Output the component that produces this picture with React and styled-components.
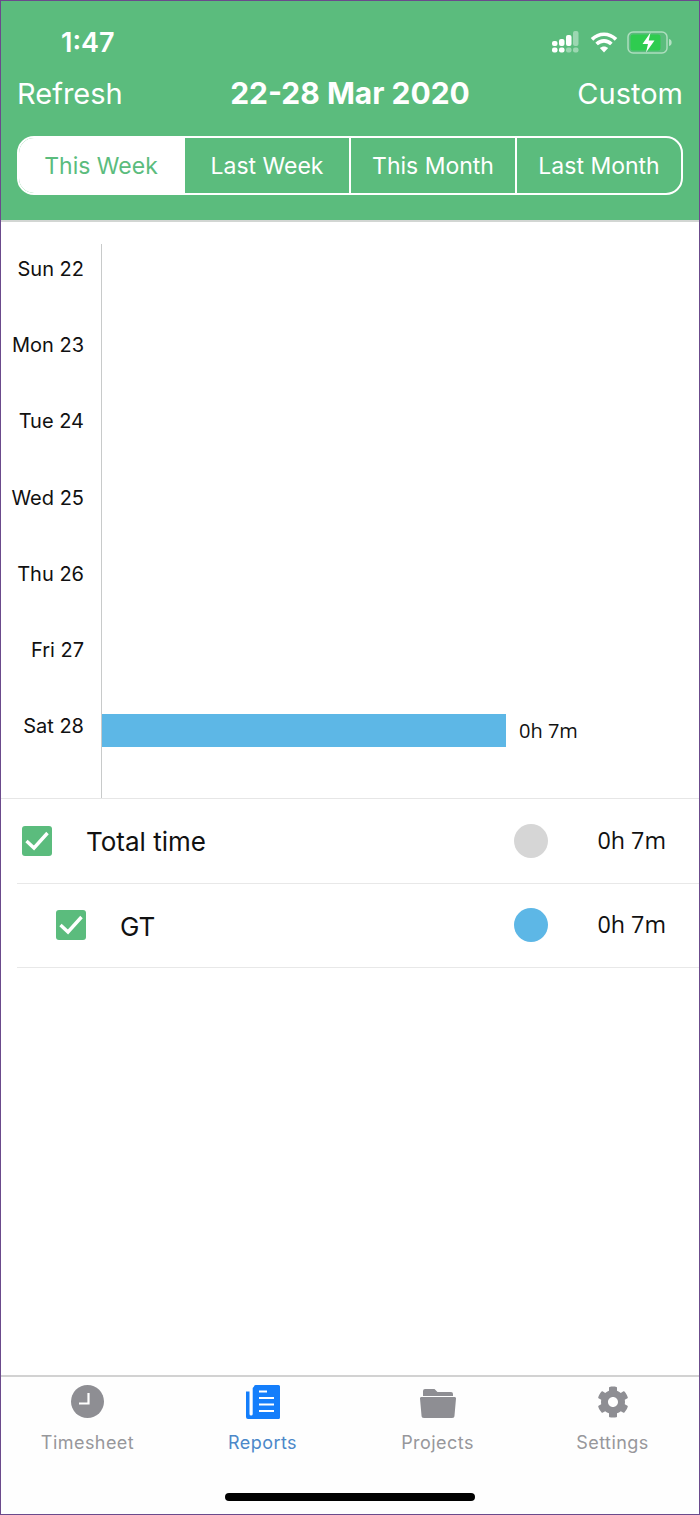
import React from 'react'
import styled, { createGlobalStyle } from 'styled-components'
import { FaCog } from 'react-icons/fa'

const GREEN = '#5BBC7D'
const BLUE = '#5DB7E6'

const GlobalStyle = createGlobalStyle`
  html, body { margin: 0; padding: 0; background: #fff; }
  * { box-sizing: border-box; }
  body { font-family: Inter, "Liberation Sans", sans-serif; }
`

const Phone = styled.div`
  width: 700px;
  height: 1515px;
  border: 1px solid #6B4A8C;
  display: flex;
  flex-direction: column;
  background: #fff;
  overflow: hidden;
`
const Header = styled.header`
  height: 221px;
  flex: none;
  background: ${GREEN};
  border-bottom: 2px solid #D2D6D3;
  color: #fff;
`
const StatusBar = styled.div`
  height: 70px;
  display: flex;
  align-items: center;
  justify-content: space-between;
  padding: 12px 26px 0 60px;
`
const Clock = styled.span`
  font-size: 27px;
  font-weight: 600;
`
const StatusIcons = styled.div`
  display: flex;
  align-items: center;
  gap: 9px;
`
const NavRow = styled.div`
  height: 44px;
  display: flex;
  align-items: center;
  justify-content: space-between;
  padding: 0 16px;
`
const NavButton = styled.span`
  font-size: 29px;
  font-weight: 400;
  width: 120px;
  text-align: ${p => p.$right ? 'right' : 'left'};
`
const Title = styled.h1`
  margin: 0;
  font-size: 30px;
  font-weight: 700;
`
const Segments = styled.div`
  display: flex;
  height: 59px;
  margin: 21px 16px 0;
  border: 2px solid #fff;
  border-radius: 17px;
  overflow: hidden;
`
const Segment = styled.div`
  flex: 1;
  display: flex;
  align-items: center;
  justify-content: center;
  font-size: 23px;
  background: ${p => p.$active ? '#fff' : 'transparent'};
  color: ${p => p.$active ? GREEN : '#fff'};
  & + & { border-left: ${p => p.$noDivider ? 'none' : '2px solid #fff'}; }
`
const Chart = styled.section`
  height: 577px;
  flex: none;
  padding-top: 22px;
  border-bottom: 1px solid #E6E6E6;
`
const Plot = styled.div`
  height: 100%;
  display: flex;
  flex-direction: column;
`
const ChartRow = styled.div`
  height: 76.2px;
  flex: none;
  display: flex;
  align-items: flex-start;
`
const DayLabel = styled.span`
  width: 100px;
  flex: none;
  padding: 13px 17px 0 0;
  text-align: right;
  font-size: 20px;
  line-height: 24px;
  color: #111;
`
const Track = styled.div`
  flex: 1;
  align-self: stretch;
  display: flex;
  align-items: flex-start;
  padding-top: 13px;
  border-left: 1px solid #C8CACA;
`
const Axis = styled.div`
  flex: 1;
  margin-left: 100px;
  border-left: 1px solid #C8CACA;
`
const Bar = styled.div`
  height: 33px;
  background: ${BLUE};
`
const BarValue = styled.span`
  margin: 4px 0 0 13px;
  font-family: "Open Sans", "Liberation Sans", sans-serif;
  font-size: 20px;
  line-height: 26px;
  color: #111;
`
const LegendRow = styled.div`
  height: 84.5px;
  margin-left: 16px;
  padding: 0 33px 0 ${p => p.$indent ? 39 : 5}px;
  display: flex;
  align-items: center;
  border-bottom: 1px solid #E8E8E8;
`
const Check = styled.span`
  width: 30px;
  height: 30px;
  flex: none;
  display: flex;
  align-items: center;
  justify-content: center;
  border-radius: 3px;
  background: ${GREEN};
`
const LegendName = styled.span`
  margin-left: 34px;
  padding-top: 2px;
  flex: 1;
  font-size: 26px;
  color: #111;
`
const Dot = styled.span`
  width: 34px;
  height: 34px;
  flex: none;
  border-radius: 50%;
  background: ${p => p.$color};
`
const LegendValue = styled.span`
  margin-left: 49px;
  padding-bottom: 2px;
  font-family: "Open Sans", "Liberation Sans", sans-serif;
  font-size: 23.3px;
  color: #111;
`
const Spacer = styled.div`
  flex: 1;
`
const TabBar = styled.nav`
  height: 139px;
  flex: none;
  border-top: 2px solid #D2D2D2;
  display: flex;
  flex-direction: column;
  background: #FEFEFE;
`
const Tabs = styled.div`
  display: flex;
  width: 700px;
  margin-left: -1px;
`
const Tab = styled.div`
  flex: 1;
  height: 116px;
  padding-top: 7px;
  display: flex;
  flex-direction: column;
  align-items: center;
  color: ${p => p.$active ? '#4C88C9' : '#97979B'};
`
const TabIcon = styled.span`
  height: 35px;
  display: flex;
  align-items: center;
  justify-content: center;
  color: ${p => p.$active ? '#147EFB' : '#8E8E93'};
`
const TabLabel = styled.span`
  margin-top: 12px;
  font-size: 18px;
  line-height: 24px;
  letter-spacing: 0.45px;
`
const HomeIndicator = styled.div`
  width: 250px;
  height: 8px;
  margin: 0 auto;
  border-radius: 4px;
  background: #000;
  flex: none;
`

const SignalIcon = () => (
  <svg width="30" height="22" viewBox="0 0 30 22">
    <rect x="1" y="10" width="5.500" height="5" rx="2" fill="#fff" />
    <rect x="1" y="16.500" width="5.500" height="5" rx="2" fill="#fff" />
    <rect x="8" y="8" width="5.500" height="7" rx="2" fill="#fff" />
    <rect x="8" y="16.500" width="5.500" height="5" rx="2" fill="#fff" />
    <rect x="15" y="4" width="5.500" height="11" rx="2" fill="#fff" />
    <rect x="15" y="16.500" width="5.500" height="5" rx="2" fill="#fff" opacity=".4" />
    <rect x="22" y="0" width="5.500" height="15" rx="2" fill="#fff" opacity=".4" />
    <rect x="22" y="16.500" width="5.500" height="5" rx="2" fill="#fff" opacity=".4" />
  </svg>
)

const WifiIcon = () => (
  <svg width="28" height="22" viewBox="0 0 28 22" fill="none" stroke="#fff" strokeWidth="3.600">
    <path d="M2 8.400C9 1.600 19 1.600 26 8.400" />
    <path d="M6.600 13C11 8.800 17 8.800 21.400 13" />
    <path d="M14 21.500l-4.200-4.400c2.400-2.100 6-2.100 8.400 0z" fill="#fff" stroke="none" />
  </svg>
)

const BatteryIcon = () => (
  <svg width="46" height="23" viewBox="0 0 46 23">
    <rect x="1" y="1" width="39" height="21" rx="5" fill="none" stroke="#fff" strokeOpacity=".5" strokeWidth="1.500" />
    <rect x="3.500" y="3.500" width="30" height="16" rx="2.500" fill="#2ECC4F" />
    <path d="M42 8c2 .5 2.600 1.800 2.600 3.500S44 14.500 42 15z" fill="#fff" opacity=".55" />
    <path d="M23.500 1.500l-8 11.500h5.500l-2 8.500 8.500-12h-5.800z" fill="#fff" />
  </svg>
)

const ClockIcon = () => (
  <svg width="33" height="33" viewBox="0 0 33 33">
    <circle cx="16.500" cy="16.500" r="16.500" fill="currentColor" />
    <path d="M17.500 8v10.500H8" fill="none" stroke="#fff" strokeWidth="2.200" />
  </svg>
)

const ReportsIcon = () => (
  <svg width="34" height="34" viewBox="0 0 34 34">
    <path d="M8 1.500A1.500 1.500 0 0 1 9.500 0h23A1.500 1.500 0 0 1 34 1.500v31a1.500 1.500 0 0 1-1.500 1.500H2a2 2 0 0 1-2-2V6.500h3.500v22.500a1.600 1.600 0 0 0 3.200 0V3z" fill="currentColor" />
    <path d="M13 6.500h8M13 13h15M13 19.500h15M13 26h15" stroke="#fff" strokeWidth="2" fill="none" />
  </svg>
)

const FolderIcon = () => (
  <svg width="36" height="32" viewBox="0 0 36 32">
    <path d="M3 5a2 2 0 0 1 2-2h9.500l3 3H31a2 2 0 0 1 2 2v2H3z" fill="currentColor" />
    <path d="M1.500 11h33A1.500 1.500 0 0 1 36 12.600L34.500 29.500A2.500 2.500 0 0 1 32 32H4a2.500 2.500 0 0 1-2.500-2.500L0 12.600A1.500 1.500 0 0 1 1.500 11z" fill="currentColor" />
  </svg>
)

const CheckMark = () => (
  <svg width="24" height="20" viewBox="0 0 24 20" fill="none" stroke="#fff" strokeWidth="3.400">
    <path d="M1.500 10l7.500 7L22.500 2" />
  </svg>
)

const days = ['Sun 22', 'Mon 23', 'Tue 24', 'Wed 25', 'Thu 26', 'Fri 27', 'Sat 28']
const ranges = ['This Week', 'Last Week', 'This Month', 'Last Month']

const tabs = [
  { name: 'Timesheet', icon: <ClockIcon /> },
  { name: 'Reports', icon: <ReportsIcon />, active: true },
  { name: 'Projects', icon: <FolderIcon /> },
  { name: 'Settings', icon: <FaCog size={32} /> },
]

export default function App() {
  return (
    <Phone>
      <GlobalStyle />
      <Header>
        <StatusBar>
          <Clock>1:47</Clock>
          <StatusIcons>
            <SignalIcon />
            <WifiIcon />
            <BatteryIcon />
          </StatusIcons>
        </StatusBar>
        <NavRow>
          <NavButton>Refresh</NavButton>
          <Title>22-28 Mar 2020</Title>
          <NavButton $right>Custom</NavButton>
        </NavRow>
        <Segments>
          {ranges.map((r, i) => (
            <Segment key={r} $active={i === 0} $noDivider={i === 1}>{r}</Segment>
          ))}
        </Segments>
      </Header>

      <Chart>
        <Plot>
          {days.map(d => (
            <ChartRow key={d}>
              <DayLabel>{d}</DayLabel>
              <Track>
                {d === 'Sat 28' && (
                  <>
                    <Bar style={{ width: 404 }} />
                    <BarValue>0h 7m</BarValue>
                  </>
                )}
              </Track>
            </ChartRow>
          ))}
          <Axis />
        </Plot>
      </Chart>

      <LegendRow>
        <Check><CheckMark /></Check>
        <LegendName>Total time</LegendName>
        <Dot $color="#D6D6D6" />
        <LegendValue>0h 7m</LegendValue>
      </LegendRow>
      <LegendRow $indent>
        <Check><CheckMark /></Check>
        <LegendName>GT</LegendName>
        <Dot $color={BLUE} />
        <LegendValue>0h 7m</LegendValue>
      </LegendRow>

      <Spacer />

      <TabBar>
        <Tabs>
          {tabs.map(t => (
            <Tab key={t.name} $active={t.active}>
              <TabIcon $active={t.active}>{t.icon}</TabIcon>
              <TabLabel>{t.name}</TabLabel>
            </Tab>
          ))}
        </Tabs>
        <HomeIndicator />
      </TabBar>
    </Phone>
  )
}
